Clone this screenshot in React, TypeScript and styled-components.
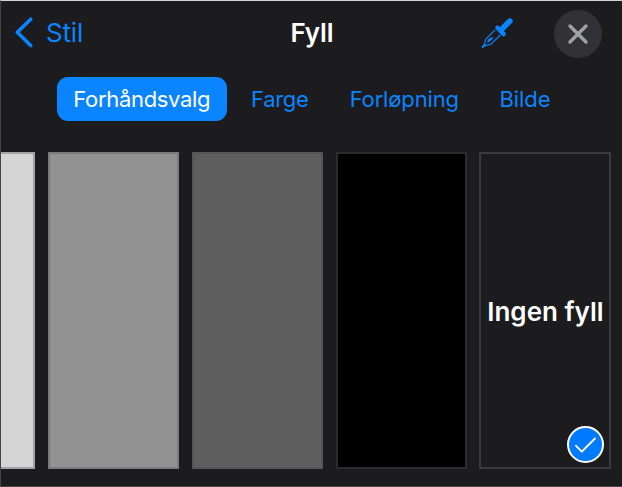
import React from "react";
import styled, { createGlobalStyle } from "styled-components";

const GlobalStyle = createGlobalStyle`
  * { box-sizing: border-box; }
  body { margin: 0; background: #1c1c1e; }
  button { appearance: none; border: 0; padding: 0; margin: 0; background: none; font: inherit; color: inherit; }
`;

const Panel = styled.main`
  width: 622px;
  height: 487px;
  overflow: hidden;
  background: #1c1c1e;
  border: 1px solid #444547;
  border-top-color: #cfd5d5;
  border-right: 0;
  font-family: Inter, "Liberation Sans", sans-serif;
  color: #fff;
`;

const Header = styled.header`
  display: grid;
  grid-template-columns: 1fr auto 1fr;
  align-items: center;
  height: 65px;
  padding: 0 20px 0 12px;
`;

const BackButton = styled.button`
  display: flex;
  align-items: center;
  gap: 12px;
  justify-self: start;
  color: #0a84ff;
  font-size: 26px;
  line-height: 32px;
  letter-spacing: -0.2px;
  padding-bottom: 1px;
`;

const Title = styled.h1`
  margin: 0;
  padding: 0 0 1px 9px;
  font-size: 26px;
  font-weight: 600;
  line-height: 32px;
  letter-spacing: -0.1px;
`;

const Actions = styled.div`
  display: flex;
  align-items: center;
  justify-self: end;
  gap: 40px;
`;

const IconButton = styled.button`
  display: flex;
  padding-bottom: 2px;
  color: #0a84ff;
`;

const CloseButton = styled(IconButton)`
  width: 48px;
  height: 48px;
  padding: 0;
  align-items: center;
  justify-content: center;
  border-radius: 50%;
  background: #323236;
  color: #a0a0a8;
`;

const Tabs = styled.nav`
  display: flex;
  margin: 11px 0 0 56px;
`;

const Tab = styled.button<{ $active?: boolean; $width: number; $spacing: number }>`
  width: ${(p) => p.$width}px;
  height: 44px;
  border-radius: 11px;
  background: ${(p) => (p.$active ? "#0a84ff" : "transparent")};
  color: ${(p) => (p.$active ? "#fff" : "#0a84ff")};
  font-size: 22px;
  line-height: 44px;
  letter-spacing: ${(p) => p.$spacing}px;
  white-space: nowrap;
`;

const Swatches = styled.section`
  display: flex;
  gap: 12.6px;
  margin: 31px 0 0 -96.8px;
`;

const Swatch = styled.button<{ $fill: string; $edge: string }>`
  position: relative;
  flex: 0 0 131.2px;
  height: 317px;
  background: ${(p) => p.$fill};
  border: 2px solid ${(p) => p.$edge};
  font-size: 26px;
  font-weight: 600;
  letter-spacing: 0;
  white-space: nowrap;
`;

const FillLabel = styled.span`
  display: block;
  padding: 2px 0 0 1px;
`;

const SelectedBadge = styled.span`
  position: absolute;
  right: 4.5px;
  bottom: 4px;
  display: flex;
  width: 37px;
  height: 37px;
  border: 2.5px solid #fff;
  border-radius: 50%;
  background: #007aff;
`;

const tabs = [
  { label: "Forhåndsvalg", width: 169.5, spacing: -0.32 },
  { label: "Farge", width: 106.5, spacing: -0.35 },
  { label: "Forløpning", width: 142.5, spacing: -0.15 },
  { label: "Bilde", width: 99, spacing: -0.1 },
];

const fills = [
  { fill: "#d5d5d5", edge: "#a3a3a4" },
  { fill: "#929292", edge: "#7b7b7c" },
  { fill: "#5e5e5e", edge: "#555557" },
  { fill: "#000000", edge: "#2c2c2e" },
];

export default function App() {
  return (
    <>
      <GlobalStyle />
      <Panel>
        <Header>
          <BackButton>
            <svg width="21" height="34" viewBox="0 0 21 34" fill="none" stroke="currentColor" strokeWidth="3.7" strokeLinecap="round" strokeLinejoin="round">
              <path d="M17.7 3.2 4.3 16.3l13.4 13.2" />
            </svg>
            Stil
          </BackButton>
          <Title>Fyll</Title>
          <Actions>
            <IconButton aria-label="Pipette">
              <svg width="34" height="34" viewBox="0 0 34 34" fill="none" stroke="currentColor">
                <path d="M22.5 12.5 29.9 5.1" strokeWidth="5.6" strokeLinecap="round" />
                <path d="m17.4 11.8 6.3 6.3" strokeWidth="4.4" strokeLinecap="round" />
                <path d="M15 14 5.6 23.4l-1 4.4-2 3.2 3.4-1.6 4.6-1L20.4 19" strokeWidth="1.2" strokeLinejoin="round" />
                <path d="m7.6 26.2.5-2.2 2-2 3.2-.2-3.6 3.6Z" fill="currentColor" strokeWidth=".5" />
                <path d="m2 31.6 3.3-3.3" strokeWidth="1.8" />
              </svg>
            </IconButton>
            <CloseButton aria-label="Lukk">
              <svg width="24" height="24" viewBox="0 0 24 24" stroke="currentColor" strokeWidth="3.4" strokeLinecap="round">
                <path d="m4 4 16 16M20 4 4 20" />
              </svg>
            </CloseButton>
          </Actions>
        </Header>
        <Tabs>
          {tabs.map((tab, i) => (
            <Tab key={tab.label} $active={i === 0} $width={tab.width} $spacing={tab.spacing}>
              {tab.label}
            </Tab>
          ))}
        </Tabs>
        <Swatches>
          {fills.map((s) => (
            <Swatch key={s.fill} $fill={s.fill} $edge={s.edge} />
          ))}
          <Swatch $fill="#1c1c1e" $edge="#3a3a3c">
            <FillLabel>Ingen fyll</FillLabel>
            <SelectedBadge>
              <svg width="32" height="32" viewBox="0 0 32 32" fill="none" stroke="#fff" strokeWidth="1.9" strokeLinecap="round" strokeLinejoin="round">
                <path d="m7 17.8 5.8 5.9L26 10.5" />
              </svg>
            </SelectedBadge>
          </Swatch>
        </Swatches>
      </Panel>
    </>
  );
}
